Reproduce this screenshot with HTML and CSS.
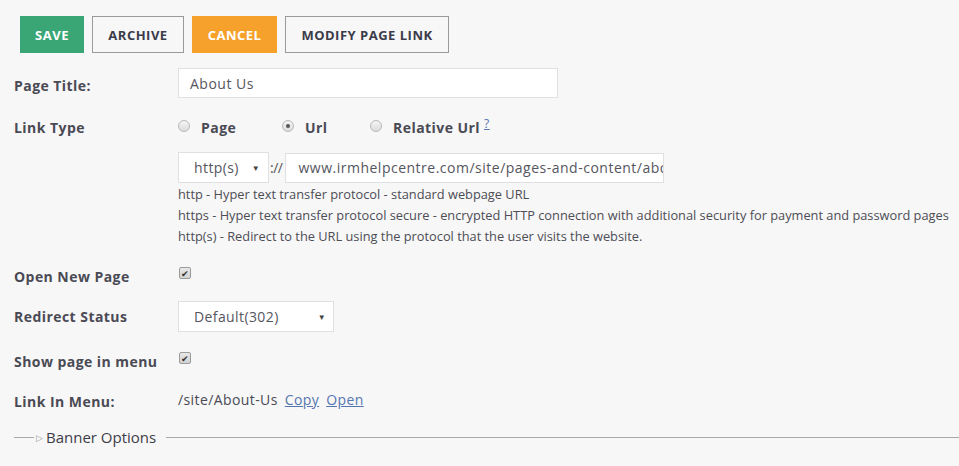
FILE: index.html
```html
<!DOCTYPE html>
<html>
<head>
<meta charset="utf-8">
<link rel="stylesheet" href="styles.css">
</head>
<body>
<div class="page">
  <div class="toolbar">
    <button class="btn btn-save">SAVE</button>
    <button class="btn btn-outline">ARCHIVE</button>
    <button class="btn btn-cancel">CANCEL</button>
    <button class="btn btn-outline">MODIFY PAGE LINK</button>
  </div>

  <div class="row row-title">
    <div class="label">Page Title:</div>
    <div class="field"><div class="input input-title">About Us</div></div>
  </div>

  <div class="row row-type">
    <div class="label">Link Type</div>
    <div class="field radios">
      <span class="radio"></span><span class="radio-label rl-page">Page</span>
      <span class="radio checked"></span><span class="radio-label rl-url">Url</span>
      <span class="radio"></span><span class="radio-label">Relative Url</span><a class="help" href="#">?</a>
    </div>
  </div>

  <div class="row row-url">
    <div class="label"></div>
    <div class="field">
      <div class="select select-proto"><span>http(s)</span><span class="arrow">▼</span></div>
      <span class="sep">://</span>
      <input class="input input-url" type="text" readonly value="www.irmhelpcentre.com/site/pages-and-content/about-us">
    </div>
  </div>

  <div class="row row-help">
    <div class="label"></div>
    <div class="help-text">
      <div>http - Hyper text transfer protocol - standard webpage URL</div>
      <div>https - Hyper text transfer protocol secure - encrypted HTTP connection with additional security for payment and password pages</div>
      <div>http(s) - Redirect to the URL using the protocol that the user visits the website.</div>
    </div>
  </div>

  <div class="row row-open">
    <div class="label">Open New Page</div>
    <div class="field"><span class="checkbox">✔</span></div>
  </div>

  <div class="row row-redirect">
    <div class="label">Redirect Status</div>
    <div class="field"><div class="select select-status"><span>Default(302)</span><span class="arrow">▼</span></div></div>
  </div>

  <div class="row row-show">
    <div class="label">Show page in menu</div>
    <div class="field"><span class="checkbox">✔</span></div>
  </div>

  <div class="row row-link">
    <div class="label">Link In Menu:</div>
    <div class="field link-field">
      <span class="path">/site/About-Us</span>
      <a href="#" class="lnk">Copy</a>
      <a href="#" class="lnk">Open</a>
    </div>
  </div>

  <div class="banner">
    <span class="bline short"></span>
    <span class="tri">▷</span>
    <span class="btext">Banner Options</span>
    <span class="bline long"></span>
  </div>
</div>
</body>
</html>
```

FILE: styles.css
```css
* { box-sizing: border-box; }
html, body { margin: 0; padding: 0; background: #f7f7f7; }
body {
  font-family: "Open Sans", "Liberation Sans", sans-serif;
  color: #4a4a52;
  width: 959px;
  height: 466px;
  overflow: hidden;
}
.page { padding-left: 14px; }

.toolbar {
  display: flex;
  gap: 8px;
  margin-top: 16px;
  padding-left: 6px;
  height: 37px;
}
.btn {
  font-family: "Open Sans", "Liberation Sans", sans-serif;
  font-weight: 700;
  font-size: 13px;
  letter-spacing: 0.5px;
  height: 37px;
  padding: 0;
  border: 1px solid #9a9a9a;
  background: #f7f7f7;
  color: #3b3b4a;
  cursor: pointer;
}
.btn-save { background: #3aa676; border-color: #3aa676; color: #fff; width: 64px; }
.btn-cancel { background: #f6a12b; border-color: #f6a12b; color: #fff; width: 85px; }
.btn-outline:nth-child(2) { width: 92px; }
.btn-outline:nth-child(4) { width: 164px; }

.row { display: flex; align-items: center; }
.label {
  width: 164px;
  flex: none;
  font-weight: 700;
  font-size: 14px;
  letter-spacing: 0.45px;
  color: #4a4a55;
}
.field { display: flex; align-items: center; }

.row-title { margin-top: 15px; height: 30px; }
.row-title .label { padding-top: 5px; }
.input {
  background: #fff;
  border: 1px solid #e0e0e0;
  height: 30px;
  display: flex;
  align-items: center;
  padding-left: 11px;
  font-family: "Open Sans", "Liberation Sans", sans-serif;
  font-size: 14px;
  letter-spacing: 0.5px;
  color: #55555e;
  white-space: nowrap;
  overflow: hidden;
  margin: 0;
  outline: none;
  border-radius: 0;
}
.input-title { width: 380px; }

.row-type { margin-top: 14px; height: 30px; }
.radios { font-weight: 700; font-size: 14px; letter-spacing: 0.45px; color: #4a4a55; }
.radio {
  width: 12px; height: 12px;
  border-radius: 50%;
  border: 1px solid #b8b8b8;
  background: linear-gradient(#f4f4f4, #dcdcdc);
  display: inline-block;
  position: relative;
  margin-top: -2px;
  flex: none;
}
.radio.checked::after {
  content: "";
  position: absolute;
  left: 3px; top: 3px;
  width: 4px; height: 4px;
  border-radius: 50%;
  background: #555;
}
.radio-label { margin-left: 11px; }
.rl-page { width: 81px; }
.rl-url { width: 65px; }
.help {
  color: #5576b0;
  font-weight: 400;
  font-size: 12px;
  margin-left: 4px;
  margin-top: -8px;
}

.row-url { margin-top: 10px; height: 31px; }
.select {
  background: #fff;
  border: 1px solid #e0e0e0;
  height: 31px;
  display: flex;
  align-items: center;
  justify-content: space-between;
  padding: 0 8px 0 15px;
  font-size: 14px;
  letter-spacing: 0.4px;
  color: #55555e;
}
.select .arrow { font-size: 8px; color: #444; }
.select-proto { width: 91px; }
.sep { margin: 0 3px 0 1px; font-size: 14px; color: #555; letter-spacing: -0.5px; }
.input-url { width: 379px; height: 30px; padding-left: 12px; padding-right: 0; display: block; }

.row-help { margin-top: 1px; align-items: flex-start; }
.help-text { font-size: 12.8px; line-height: 21px; color: #4d4d55; white-space: nowrap; }

.row-open { margin-top: 15px; height: 28px; }
.checkbox {
  width: 12px; height: 12px;
  border: 1px solid #9c9c9c;
  border-radius: 2px;
  background: linear-gradient(#e8e8e8, #d2d2d2);
  display: inline-flex;
  align-items: center;
  justify-content: center;
  font-size: 9px;
  line-height: 1;
  color: #333;
  margin-left: 1px;
  margin-top: -6px;
}

.row-redirect { margin-top: 11px; height: 31px; }
.select-status { width: 156px; padding-right: 7px; }

.row-show { margin-top: 15px; height: 28px; }

.row-link { margin-top: 11px; height: 28px; }
.row-link .label { padding-top: 2px; }
.link-field { font-size: 14px; letter-spacing: 0.4px; color: #4a4a55; margin-top: -2px; }
.lnk { color: #5576b0; text-decoration: underline; margin-left: 7px; }

.banner {
  display: flex;
  align-items: center;
  margin-top: 13px;
  height: 20px;
}
.bline { height: 1px; background: #a8a8a8; display: block; }
.bline.short { width: 20px; }
.bline.long { flex: 1; margin-left: 10px; }
.tri { font-size: 9px; color: #999; margin: 0 3px 0 2px; }
.btext { font-size: 15px; color: #3c3c48; }
```
